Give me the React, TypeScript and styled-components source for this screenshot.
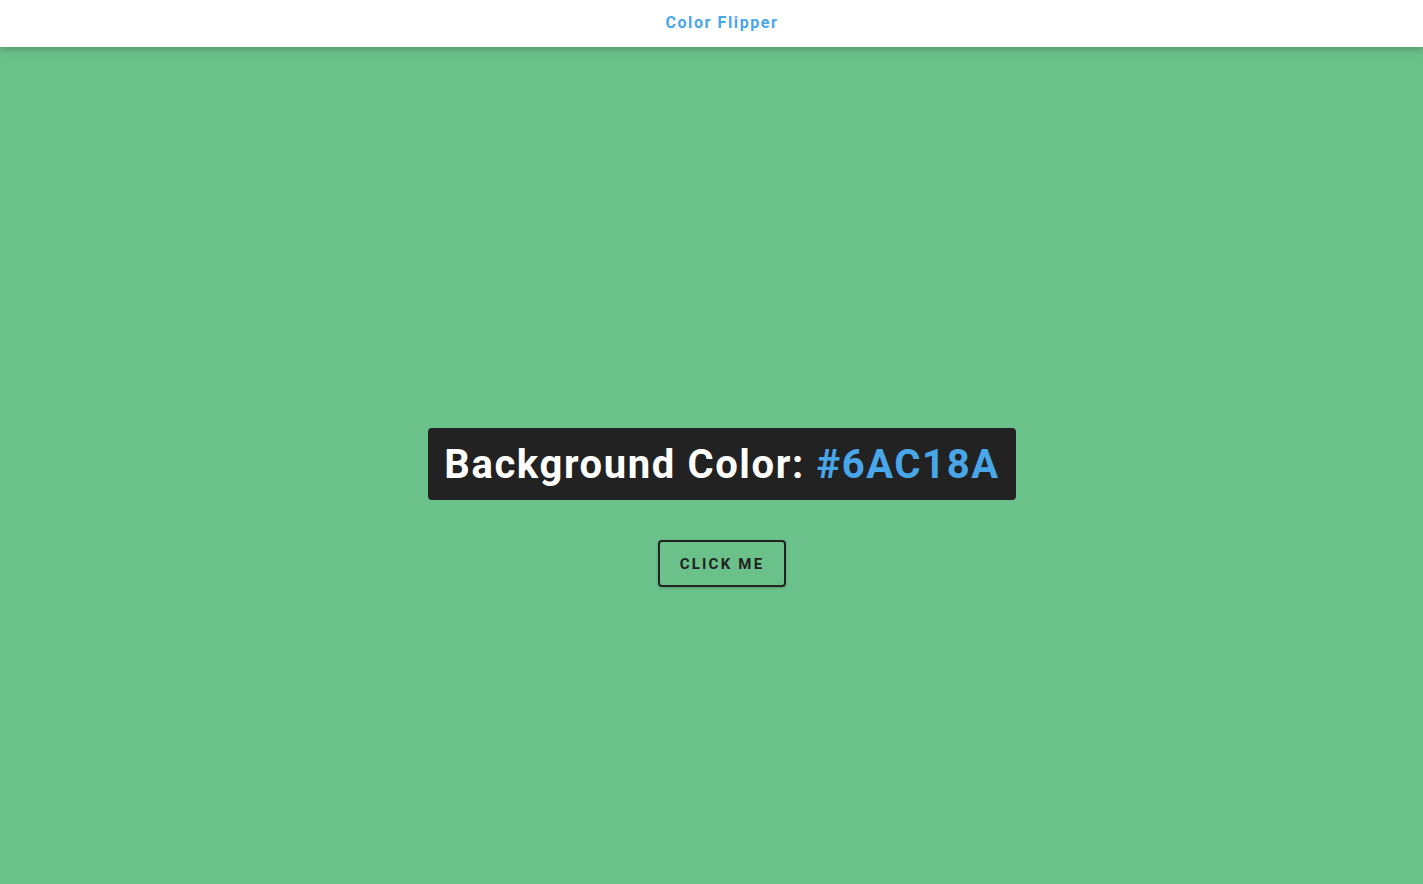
import React, { useState } from "react";
import styled, { createGlobalStyle } from "styled-components";

const GlobalStyle = createGlobalStyle`
  *, *::before, *::after { box-sizing: border-box; }
  body {
    margin: 0;
    font-family: Roboto, "Open Sans", sans-serif;
    background: #6ac18a;
  }
`;

const Nav = styled.nav`
  height: 47px;
  background: #fff;
  box-shadow: 0 2px 8px rgba(0, 0, 0, 0.25);
  display: flex;
  align-items: center;
  justify-content: center;
  padding-left: 21px;
  padding-bottom: 2px;
  position: relative;
  z-index: 1;
`;

const Title = styled.h4`
  margin: 0;
  color: #49a6e9;
  font-size: 16px;
  font-weight: 700;
  letter-spacing: 1.6px;
`;

const Main = styled.main<{ $bg: string }>`
  min-height: calc(100vh - 47px);
  background: ${(p) => p.$bg};
  display: flex;
  align-items: center;
  justify-content: center;
  padding-top: 84px;
  padding-left: 21px;
`;

const Container = styled.div`
  display: flex;
  flex-direction: column;
  align-items: center;
`;

const Banner = styled.h2`
  margin: 0 0 40px;
  background: #222;
  color: #fff;
  font-size: 40px;
  font-weight: 700;
  letter-spacing: 1.6px;
  line-height: 52px;
  padding: 11px 16px 9px;
  border-radius: 4px;
`;

const Hex = styled.span`
  color: #49a6e9;
`;

const Button = styled.button`
  font-family: inherit;
  text-transform: uppercase;
  background: transparent;
  color: #222;
  letter-spacing: 2.2px;
  font-weight: 700;
  font-size: 15px;
  line-height: 19px;
  border: 2px solid #222;
  padding: 13px 20px 11px 20px;
  border-radius: 4px;
  box-shadow: 0 1px 3px rgba(0, 0, 0, 0.2);
  cursor: pointer;
`;

export default function App() {
  const [color, setColor] = useState("#6AC18A");
  const flip = () => {
    const hex = "0123456789ABCDEF";
    let c = "#";
    for (let i = 0; i < 6; i++) c += hex[Math.floor(Math.random() * 16)];
    setColor(c);
  };
  return (
    <>
      <GlobalStyle />
      <Nav>
        <Title>Color Flipper</Title>
      </Nav>
      <Main $bg={color}>
        <Container>
          <Banner>
            Background Color: <Hex>{color}</Hex>
          </Banner>
          <Button onClick={flip}>Click Me</Button>
        </Container>
      </Main>
    </>
  );
}
